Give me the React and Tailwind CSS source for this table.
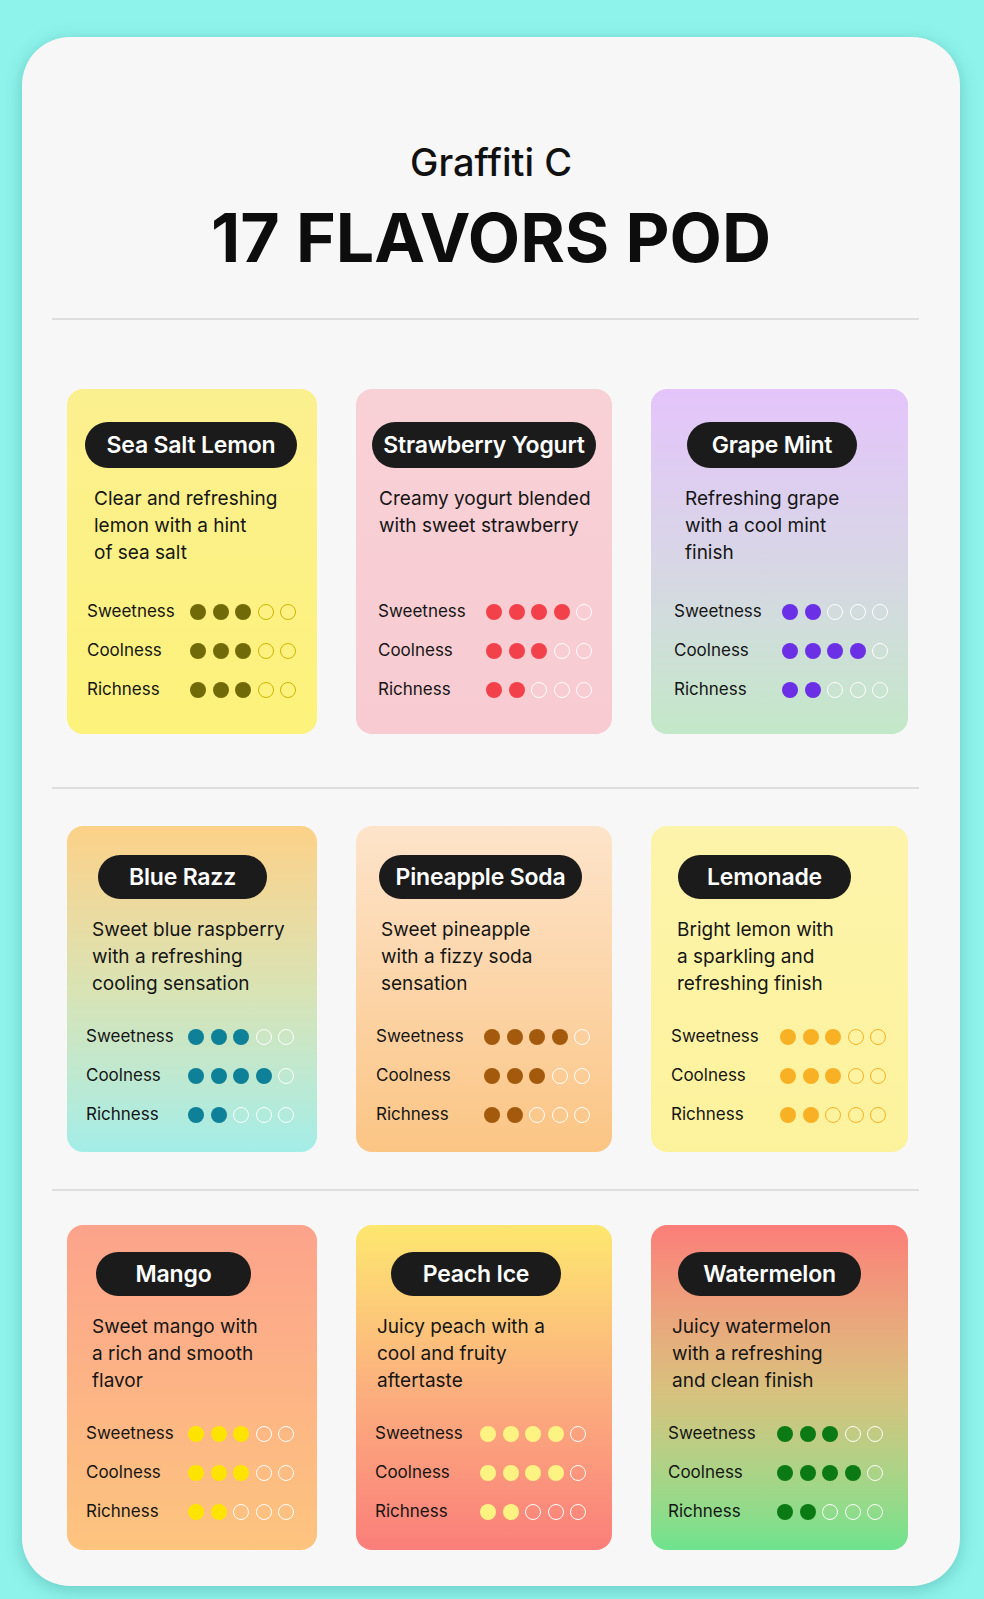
import React from "react";

const rows = [
  {
    cls: "h-[345px] pt-[33px] pb-[25px]",
    pill: "h-[46px]",
    cards: [
      {
        name: "Sea Salt Lemon",
        lines: ["Clear and refreshing", "lemon with a hint", "of sea salt"],
        bg: "bg-gradient-to-b from-[#fbf08f] to-[#fdf27a]",
        pill: "ml-[18px] w-[212px]",
        desc: "pl-[27px]",
        label: "pl-[20px]",
        labelW: "w-[103px]",
        on: "bg-[#716a08]",
        off: "border-[1.5px] border-[#cdb500]",
        r: [3, 3, 3],
      },
      {
        name: "Strawberry Yogurt",
        lines: ["Creamy yogurt blended", "with sweet strawberry"],
        bg: "bg-gradient-to-b from-[#f8d1d6] to-[#f7cbd1]",
        pill: "ml-[16px] w-[224px]",
        desc: "pl-[23px]",
        label: "pl-[22px]",
        labelW: "w-[108px]",
        on: "bg-[#f2414a]",
        off: "border-[1.5px] border-white",
        r: [4, 3, 2],
      },
      {
        name: "Grape Mint",
        lines: ["Refreshing grape", "with a cool mint", "finish"],
        bg: "bg-gradient-to-b from-[#e4c4fb] via-[#d8d6e6] to-[#c3e8c8]",
        pill: "ml-[36px] w-[170px]",
        desc: "pl-[34px]",
        label: "pl-[23px]",
        labelW: "w-[108px]",
        on: "bg-[#6b30e6]",
        off: "border-[1.5px] border-white",
        r: [2, 4, 2],
      },
    ],
  },
  {
    cls: "h-[326px] pt-[29px] pb-[18px]",
    pill: "h-[44px]",
    cards: [
      {
        name: "Blue Razz",
        lines: ["Sweet blue raspberry", "with a refreshing", "cooling sensation"],
        bg: "bg-gradient-to-b from-[#fcd188] via-[#d9e3b4] to-[#a3ede8]",
        pill: "ml-[31px] w-[169px]",
        desc: "pl-[25px]",
        label: "pl-[19px]",
        labelW: "w-[102px]",
        on: "bg-[#0e8097]",
        off: "border-[1.5px] border-white",
        r: [3, 4, 2],
      },
      {
        name: "Pineapple Soda",
        lines: ["Sweet pineapple", "with a fizzy soda", "sensation"],
        bg: "bg-gradient-to-b from-[#fde4ca] to-[#fbc584]",
        pill: "ml-[23px] w-[203px]",
        desc: "pl-[25px]",
        label: "pl-[20px]",
        labelW: "w-[108px]",
        on: "bg-[#a45a0c]",
        off: "border-[1.5px] border-white",
        r: [4, 3, 2],
      },
      {
        name: "Lemonade",
        lines: ["Bright lemon with", "a sparkling and", "refreshing finish"],
        bg: "bg-gradient-to-b from-[#fdf4ab] to-[#fdf29c]",
        pill: "ml-[27px] w-[173px]",
        desc: "pl-[26px]",
        label: "pl-[20px]",
        labelW: "w-[109px]",
        on: "bg-[#f8b125]",
        off: "border-[1.5px] border-[#f8b125]",
        r: [3, 3, 2],
      },
    ],
  },
  {
    cls: "h-[325px] pt-[27px] pb-[19px]",
    pill: "h-[44px]",
    cards: [
      {
        name: "Mango",
        lines: ["Sweet mango with", "a rich and smooth", "flavor"],
        bg: "bg-gradient-to-b from-[#fca38b] to-[#fdc47e]",
        pill: "ml-[29px] w-[155px]",
        desc: "pl-[25px]",
        label: "pl-[19px]",
        labelW: "w-[102px]",
        on: "bg-[#fde400]",
        off: "border-[1.5px] border-white",
        r: [3, 3, 2],
      },
      {
        name: "Peach Ice",
        lines: ["Juicy peach with a", "cool and fruity", "aftertaste"],
        bg: "bg-gradient-to-b from-[#fde76f] via-[#fbb07e] to-[#fa7e7a]",
        pill: "ml-[35px] w-[170px]",
        desc: "pl-[21px]",
        label: "pl-[19px]",
        labelW: "w-[105px]",
        on: "bg-[#fdf383]",
        off: "border-[1.5px] border-white",
        r: [4, 4, 2],
      },
      {
        name: "Watermelon",
        lines: ["Juicy watermelon", "with a refreshing", "and clean finish"],
        bg: "bg-gradient-to-b from-[#fb7e79] via-[#d9c07e] to-[#6de38e]",
        pill: "ml-[27px] w-[183px]",
        desc: "pl-[21px]",
        label: "pl-[17px]",
        labelW: "w-[109px]",
        on: "bg-[#0b7a14]",
        off: "border-[1.5px] border-white",
        r: [3, 4, 2],
      },
    ],
  },
];

const labels = ["Sweetness", "Coolness", "Richness"];

const Dots = ({ n, on, off }) => (
  <div className="flex gap-[6.5px]">
    {[0, 1, 2, 3, 4].map((i) => (
      <span
        key={i}
        className={`block h-[16px] w-[16px] rounded-full ${i < n ? on : off}`}
      />
    ))}
  </div>
);

const Card = ({ c, row }) => (
  <div className={`flex flex-col rounded-2xl ${c.bg} ${row.cls}`}>
    <div
      className={`flex items-center justify-center rounded-full bg-[#1b1b1b] text-[23px] font-semibold tracking-[-0.2px] text-white ${row.pill} ${c.pill}`}
    >
      {c.name}
    </div>
    <p className={`mt-[17px] text-[19px] leading-[27px] text-[#151515] ${c.desc}`}>
      {c.lines.map((l, i) => (
        <span key={i} className="block whitespace-nowrap">
          {l}
        </span>
      ))}
    </p>
    <div className={`mt-auto ${c.label}`}>
      {labels.map((lab, i) => (
        <div key={lab} className="flex h-[39px] items-center">
          <span className={`text-[17px] text-[#151515] ${c.labelW}`}>{lab}</span>
          <Dots n={c.r[i]} on={c.on} off={c.off} />
        </div>
      ))}
    </div>
  </div>
);

const App = () => {
  return (
    <div className="min-h-[1599px] bg-[#8ef4eb] pt-[37px] font-['Inter',sans-serif]">
      <div className="ml-[22px] w-[938px] rounded-[48px] bg-[#f7f7f7] pb-[36px] shadow-[0_4px_18px_rgba(0,80,80,0.25)]">
        <div className="pt-[102px] text-center">
          <p className="text-[38px] font-medium leading-[46px] text-[#111]">
            Graffiti C
          </p>
          <h1 className="mt-[18px] text-[68px] font-bold leading-[69px] text-[#0d0d0d]">
            17 FLAVORS POD
          </h1>
        </div>
        <div className="ml-[30px] mr-[41px] mt-[46px] h-[2px] bg-[#dedede]" />

        {rows.map((row, ri) => (
          <div key={ri}>
            {ri > 0 && (
              <div
                className={`ml-[30px] mr-[41px] h-[2px] bg-[#dedede] ${
                  ri === 1 ? "mt-[53px] mb-[37px]" : "mt-[37px] mb-[34px]"
                }`}
              />
            )}
            <div
              className={`ml-[45px] grid w-[841px] grid-cols-[250px_256px_257px] justify-between ${
                ri === 0 ? "mt-[69px]" : ""
              }`}
            >
              {row.cards.map((c) => (
                <Card key={c.name} c={c} row={row} />
              ))}
            </div>
          </div>
        ))}
      </div>
    </div>
  );
};

export default App;
